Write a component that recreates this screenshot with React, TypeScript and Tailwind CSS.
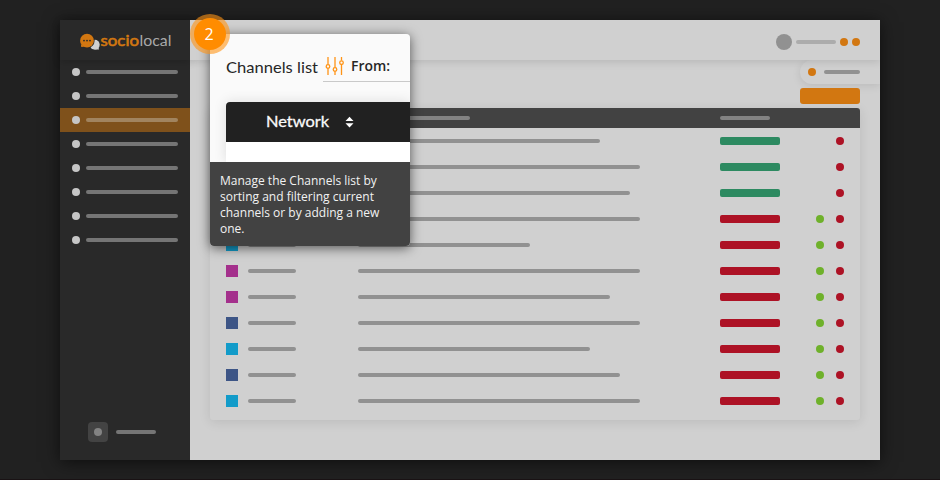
type Row = { color: string; width: number; green?: boolean };

const BLUE = "bg-[#129bc9]";
const PINK = "bg-[#a4308c]";
const NAVY = "bg-[#3d5586]";

const rows: Row[] = [
  { color: BLUE, width: 242, green: true },
  { color: BLUE, width: 282, green: true },
  { color: BLUE, width: 272, green: true },
  { color: BLUE, width: 282 },
  { color: BLUE, width: 172 },
  { color: PINK, width: 282 },
  { color: PINK, width: 252 },
  { color: NAVY, width: 282 },
  { color: BLUE, width: 232 },
  { color: NAVY, width: 262 },
  { color: BLUE, width: 282 },
];

function Logo() {
  return (
    <svg width="130" height="40" viewBox="0 0 130 40" className="block">
      <circle cx="34.8" cy="24.7" r="4.9" fill="#d0d0d0" />
      <path d="M34 29.6h5l-.8-3z" fill="#d0d0d0" />
      <circle cx="27" cy="20.7" r="7.6" fill="#292929" />
      <circle cx="27" cy="20.7" r="6.9" fill="#d27711" />
      <path d="M20.900 24l.3 2.900 3-.2z" fill="#d27711" />
      <g fill="#292929">
        <circle cx="24" cy="20.6" r=".9" />
        <circle cx="27" cy="20.6" r=".9" />
        <circle cx="30" cy="20.6" r=".9" />
      </g>
      <text x="40.5" y="26" fontSize="15" fontWeight="400" fill="#d27711" stroke="#d27711" strokeWidth=".6" textLength="38.5" lengthAdjust="spacingAndGlyphs" className="font-[family-name:Lato]">
        socio
      </text>
      <text x="79.5" y="26" fontSize="15" fontWeight="400" fill="#a8a8a8" textLength="32" lengthAdjust="spacingAndGlyphs" className="font-[family-name:Lato]">
        local
      </text>
    </svg>
  );
}

function Sidebar() {
  return (
    <aside className="flex w-[130px] flex-col bg-[#292929]">
      <div className="h-10 shadow-[0_2px_8px_rgba(0,0,0,0.18)]">
        <Logo />
      </div>
      <nav>
        {[0, 1, 2, 3, 4, 5, 6, 7].map((i) => (
          <div key={i} className={"flex h-6 items-center gap-1.5 px-3 " + (i === 2 ? "bg-[#7f511b]" : "")}>
            <span className="size-2 rounded-full bg-[#c6c6c6]" />
            <span className={"h-1 w-[92px] rounded-full " + (i === 2 ? "bg-[#a1845f]" : "bg-[#757575]")} />
          </div>
        ))}
      </nav>
      <div className="mt-auto mb-[18px] ml-7 flex items-center gap-2">
        <span className="flex size-5 items-center justify-center rounded bg-[#434343]">
          <span className="size-2 rounded-full bg-[#838383]" />
        </span>
        <span className="h-1 w-10 rounded-full bg-[#757575]" />
      </div>
    </aside>
  );
}

function Callout() {
  return (
    <div className="absolute top-[34px] left-[210px] h-[212px] w-[200px] rounded shadow-[0_2px_12px_rgba(0,0,0,0.6)]">
      <div className="flex h-full flex-col overflow-hidden rounded bg-[#fafafa]">
        <div className="flex h-12 shrink-0 pl-4">
          <svg width="96" height="48" className="block shrink-0">
            <text x="0" y="39" fontSize="16" fill="#262626" textLength="92" lengthAdjust="spacingAndGlyphs" className="font-[family-name:Lato]">
              Channels list
            </text>
          </svg>
          <div className="mt-[18px] ml-px flex h-[30px] flex-1 border-b border-[#c9c9c9]">
            <svg width="22" height="22" viewBox="0 0 22 22" fill="none" stroke="#ff9416" strokeWidth="1.3" className="mt-1 ml-0.5">
              <path d="M3 1v7.5M3 12.500V19M10 1v10.500M10 15.500V19M16.500 1v3.500M16.500 9v10" />
              <circle cx="3" cy="10.500" r="1.800" />
              <circle cx="10" cy="13.500" r="1.800" />
              <circle cx="16.500" cy="6.700" r="1.800" />
            </svg>
            <svg width="50" height="29" className="ml-1">
              <text x="0" y="19" fontSize="14" fontWeight="600" fill="#262626" textLength="39" lengthAdjust="spacingAndGlyphs" className="font-['Open_Sans',sans-serif]">
                From:
              </text>
            </svg>
          </div>
        </div>
        <div className="mt-5 ml-4 flex-1 bg-white shadow-[0_0_12px_rgba(0,0,0,0.12)]">
          <div className="h-10 rounded-tl bg-[#212121]">
            <svg width="184" height="40" className="block">
              <text x="40" y="25" fontSize="15.5" fontWeight="400" fill="#fafafa" stroke="#fafafa" strokeWidth=".3" textLength="63" lengthAdjust="spacingAndGlyphs" className="font-[family-name:Lato]">
                Network
              </text>
              <path d="M119.500 19l4-4.200 4 4.200zM119.500 21.200l4 4.200 4-4.200z" fill="#fff" />
            </svg>
          </div>
        </div>
        <div className="relative h-[84px] shrink-0 bg-[#424242] px-2.5 pt-[11px] font-['Open_Sans',sans-serif] text-[12px] leading-4 whitespace-nowrap text-[#f2f2f2]">
          Manage the Channels list by
          <br />
          sorting and filtering current
          <br />
          channels or by adding a new
          <br />
          one.
        </div>
      </div>
      <div className="absolute -top-5 -left-5 flex size-10 items-center justify-center rounded-full bg-[#ff9416]/60">
        <div className="flex size-8 items-center justify-center rounded-full bg-[#ff8c00] pr-0.5 font-['Open_Sans',sans-serif] text-[16px] text-white">
          2
        </div>
      </div>
    </div>
  );
}

export default function App() {
  return (
    <div className="relative h-[480px] w-[940px] overflow-hidden border-b border-[#191214] bg-[#212121] px-[60px] pt-5">
      <div className="flex h-[440px] w-[820px] bg-[#d0d0d0] shadow-[0_2px_16px_rgba(0,0,0,0.6)]">
        <Sidebar />
        <main className="flex flex-1 flex-col overflow-hidden">
          <header className="relative flex h-10 shrink-0 items-center justify-end bg-[#d0d0d0] pt-1 pr-5 shadow-[0_2px_8px_rgba(0,0,0,0.12)]">
            <span className="size-4 rounded-full bg-[#919191]" />
            <span className="mr-1 ml-1 h-1 w-10 rounded-full bg-[#acacac]" />
            <span className="size-2 rounded-full bg-[#d27711]" />
            <span className="ml-1 size-2 rounded-full bg-[#d27711]" />
          </header>
          <div className="ml-auto flex h-6 w-20 shrink-0 items-center rounded-l-full bg-[#d0d0d0] pl-2 shadow-[0_2px_8px_rgba(0,0,0,0.1)]">
            <span className="size-2 rounded-full bg-[#d27711]" />
            <span className="ml-2 h-1 w-9 rounded-full bg-[#919191]" />
          </div>
          <div className="mt-1 mr-5 ml-auto h-4 w-[60px] shrink-0 rounded-[3px] bg-[#d27711]" />
          <section className="mx-5 mt-1 h-[312px] shrink-0 rounded-[3px] bg-[#d0d0d0] shadow-[0_2px_12px_rgba(0,0,0,0.1)]">
            <div className="flex h-5 items-center rounded-t-[3px] bg-[#424242] pl-[148px]">
              <span className="h-1 w-28 rounded-full bg-[#838383]" />
              <span className="ml-[250px] h-1 w-[50px] rounded-full bg-[#838383]" />
            </div>
            {rows.map((r, i) => (
              <div key={i} className="flex h-[26px] items-center pr-4 pl-4">
                <span className={"size-3 " + r.color} />
                <span className="ml-2.5 h-1 w-12 rounded-full bg-[#919191]" />
                <span className="ml-[62px] w-[362px]">
                  <span className="block h-1 rounded-full bg-[#919191]" style={{ width: r.width }} />
                </span>
                <span className={"h-2 w-[60px] rounded-[2px] " + (r.green ? "bg-[#2d8a61]" : "bg-[#ad1225]")} />
                <span className={"ml-auto size-2 rounded-full " + (r.green ? "" : "bg-[#6fb12b]")} />
                <span className="ml-3 size-2 rounded-full bg-[#ad1225]" />
              </div>
            ))}
          </section>
        </main>
      </div>
      <Callout />
    </div>
  );
}
